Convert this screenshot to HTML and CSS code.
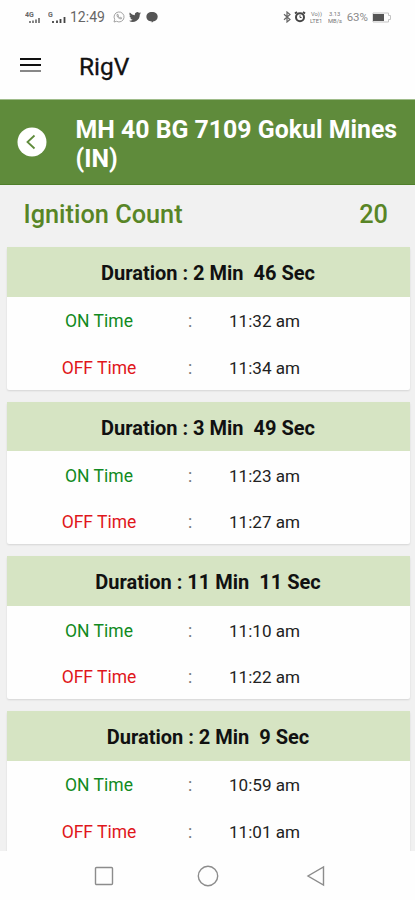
FILE: index.html
```
<!DOCTYPE html>
<html lang="en">

<head>
    <meta charset="UTF-8">
    <meta name="viewport" content="width=device-width, initial-scale=1.0">
    <title>RigV</title>
    <link rel="stylesheet" href="styles.css">
</head>

<body>
    <div class="status-bar">
        <div class="status-left">
            <svg class="signal" width="16" height="13" viewBox="0 0 16 13">
                <text x="0" y="5.5" class="tiny">4G</text>
                <path d="M5 12V10M8 12V9.5M11 12V8.5M14 12V7" />
            </svg>
            <svg class="signal second" width="18" height="13" viewBox="0 0 18 13">
                <text x="0" y="5.5" class="tiny">G</text>
                <path d="M5 12V10M9 12V9.5M12.5 12V8M16.5 12V6" />
            </svg>
            <span class="clock">12:49</span>
            <svg class="whatsapp" width="12" height="12" viewBox="0 0 12 12">
                <path d="M1 11l.7-2.6A5 5 0 1 1 3.6 10.3z" />
                <path d="M4 3.5c-.5 2 2 4.7 4.2 4.4l.4-1.1-1.3-.6-.6.6L5 5.2l.4-.7-.5-1.2z" />
            </svg>
            <svg class="solid" width="12" height="12" viewBox="0 0 24 24">
                <path d="M24 4.6a10 10 0 0 1-2.8.8 5 5 0 0 0 2.1-2.7 10 10 0 0 1-3.1 1.2 4.9 4.9 0 0 0-8.4 4.5A14 14 0 0 1 1.7 3.1a4.9 4.9 0 0 0 1.5 6.6 5 5 0 0 1-2.2-.6 4.9 4.9 0 0 0 3.9 4.9 5 5 0 0 1-2.2.1 4.9 4.9 0 0 0 4.6 3.4A10 10 0 0 1 0 19.5 14 14 0 0 0 21.5 7.1 10 10 0 0 0 24 4.6z" />
            </svg>
            <svg class="solid chat" width="12" height="12" viewBox="0 0 12 12">
                <path d="M6 1c3.5 0 5.7 2 5.7 4.7 0 2.7-2 4.5-4.600 4.700L5.800 11.700v-1.300C2.500 10.300.4 8.400.4 5.700.4 3 2.500 1 6 1z" />
            </svg>
        </div>
        <div class="status-right">
            <svg class="bluetooth" width="8" height="12" viewBox="0 0 8 12">
                <path d="M1 3.200l6 5.300L4 11V1l3 2.500-6 5.300" />
            </svg>
            <svg class="alarm" width="12" height="12" viewBox="0 0 12 12">
                <circle cx="6" cy="6.300" r="4" />
                <path d="M1 2.500L3 1M11 2.500L9 1" />
                <path class="hand" d="M6 4.300v2.200h1.600" />
            </svg>
            <svg class="rate" width="14" height="13" viewBox="0 0 14 13">
                <text x="1" y="5">Vo))</text>
                <text x="0" y="12">LTE1</text>
            </svg>
            <svg class="rate" width="15" height="13" viewBox="0 0 15 13">
                <text x="1" y="5">3.13</text>
                <text x="0" y="12">MB/s</text>
            </svg>
            <span class="percent">63%</span>
            <svg class="battery" width="20" height="11" viewBox="0 0 20 11">
                <path class="shell" d="M1 1h15.500v2.500h2v4h-2V10H1z" />
                <rect x="1" y="2" width="11" height="7" />
            </svg>
        </div>
    </div>

    <div class="app-bar">
        <div class="menu">
            <span></span>
            <span></span>
            <span></span>
        </div>
        <h1>RigV</h1>
    </div>

    <div class="vehicle">
        <svg class="back" width="30" height="30" viewBox="0 0 30 30">
            <circle cx="15" cy="15" r="14.500" />
            <path d="M17.500 8.500L10.500 15l7 6.500" />
        </svg>
        <h2>MH 40 BG 7109 Gokul Mines (IN)</h2>
    </div>

    <div class="content">
        <div class="count">
            <span>Ignition Count</span>
            <span>20</span>
        </div>

        <div class="card">
            <div class="duration">Duration : 2 Min&nbsp; 46 Sec</div>
            <div class="row">
                <span class="on">ON Time</span>
                <span class="colon">:</span>
                <span class="time">11:32 am</span>
            </div>
            <div class="row">
                <span class="off">OFF Time</span>
                <span class="colon">:</span>
                <span class="time">11:34 am</span>
            </div>
        </div>

        <div class="card">
            <div class="duration">Duration : 3 Min&nbsp; 49 Sec</div>
            <div class="row">
                <span class="on">ON Time</span>
                <span class="colon">:</span>
                <span class="time">11:23 am</span>
            </div>
            <div class="row">
                <span class="off">OFF Time</span>
                <span class="colon">:</span>
                <span class="time">11:27 am</span>
            </div>
        </div>

        <div class="card">
            <div class="duration">Duration : 11 Min&nbsp; 11 Sec</div>
            <div class="row">
                <span class="on">ON Time</span>
                <span class="colon">:</span>
                <span class="time">11:10 am</span>
            </div>
            <div class="row">
                <span class="off">OFF Time</span>
                <span class="colon">:</span>
                <span class="time">11:22 am</span>
            </div>
        </div>

        <div class="card">
            <div class="duration">Duration : 2 Min&nbsp; 9 Sec</div>
            <div class="row">
                <span class="on">ON Time</span>
                <span class="colon">:</span>
                <span class="time">10:59 am</span>
            </div>
            <div class="row">
                <span class="off">OFF Time</span>
                <span class="colon">:</span>
                <span class="time">11:01 am</span>
            </div>
        </div>
    </div>

    <div class="nav-bar">
        <svg width="20" height="20" viewBox="0 0 20 20">
            <rect x="1.500" y="1.500" width="17" height="17" rx="1" />
        </svg>
        <svg width="22" height="22" viewBox="0 0 22 22">
            <circle cx="11" cy="11" r="9.700" />
        </svg>
        <svg width="20" height="22" viewBox="0 0 20 22">
            <path d="M17.500 2v18L2 11z" />
        </svg>
    </div>
</body>

</html>
```
FILE: styles.css
```
* {
    box-sizing: border-box;
}

body {
    font-family: Roboto, sans-serif;
    background-color: #fefefe;
    color: #111;
    margin: 0;
    height: 900px;
    display: flex;
    flex-direction: column;
    overflow: hidden;
}

h1,
h2 {
    margin: 0;
}

svg {
    display: block;
    flex-shrink: 0;
}

.status-bar {
    height: 34px;
    flex-shrink: 0;
    padding: 0 23px 0 25px;
    display: flex;
    justify-content: space-between;
    align-items: center;
}

.status-left,
.status-right {
    display: flex;
    align-items: center;
}

.signal path {
    stroke: #777;
    stroke-width: 1.8;
}

.tiny {
    font-size: 7px;
    font-weight: 700;
    fill: #666;
}

.second {
    margin-left: 7px;
}

.second path {
    stroke: #444;
}

.clock {
    font-size: 14px;
    color: #666;
    margin: 0 8px 0 4px;
}

.whatsapp {
    margin-right: 4px;
}

.whatsapp path {
    fill: none;
    stroke: #999;
    stroke-width: 0.9;
}

.solid {
    fill: #555;
}

.chat {
    margin-left: 5px;
}

.bluetooth path {
    fill: none;
    stroke: #666;
    stroke-width: 1.2;
}

.alarm {
    margin-left: 3px;
}

.alarm circle,
.alarm path {
    fill: none;
    stroke: #444;
    stroke-width: 2;
}

.alarm .hand {
    stroke-width: 1;
}

.rate {
    font-size: 5.8px;
    fill: #777;
    margin-left: 4px;
}

.percent {
    font-size: 11.5px;
    color: #8a8a8a;
    margin: 0 4px;
}

.battery rect {
    fill: #555;
}

.battery .shell {
    fill: none;
    stroke: #c4c4c4;
}

.app-bar {
    height: 65px;
    flex-shrink: 0;
    padding: 0 20px 4px;
    display: flex;
    align-items: center;
}

.menu {
    width: 21px;
    display: flex;
    flex-direction: column;
    gap: 4px;
    margin-right: 38px;
}

.menu span {
    height: 2px;
    background-color: #111;
}

.menu span:last-child {
    background-color: #888;
}

h1 {
    font-size: 24.5px;
    font-weight: 400;
    -webkit-text-stroke: 0.3px #111;
    padding-top: 3px;
}

.vehicle {
    height: 86px;
    flex-shrink: 0;
    padding: 0 8px 0 17px;
    background-color: #5f8b3b;
    border-top: 1px solid #9fbc8a;
    border-bottom: 1px solid #4f7f2a;
    display: flex;
    align-items: center;
}

.back {
    margin-right: 28.5px;
}

.back circle {
    fill: #fff;
}

.back path {
    fill: none;
    stroke: #5f8b3b;
    stroke-width: 1.8;
}

h2 {
    font-size: 24.85px;
    line-height: 29px;
    font-weight: 700;
    color: #fff;
    padding-top: 4px;
}

.content {
    height: 666px;
    flex-shrink: 0;
    background-color: #f1f1f1;
    padding: 0 5.5px 0 6.5px;
    overflow: hidden;
}

.count {
    height: 62px;
    padding: 0 21.5px 4px 17px;
    display: flex;
    justify-content: space-between;
    align-items: center;
    font-size: 25.3px;
    font-weight: 500;
    color: #588526;
}

.card {
    height: 142.5px;
    margin-bottom: 12.2px;
    background-color: #fefefe;
    border-radius: 2px;
    box-shadow: 0 1px 2px rgba(0, 0, 0, 0.12);
}

.duration {
    height: 49.5px;
    line-height: 53px;
    background-color: #d6e4c3;
    font-size: 20px;
    font-weight: 700;
    text-align: center;
}

.row {
    height: 46.5px;
    padding: 3px 0 0 35px;
    display: grid;
    grid-template-columns: 115px 67px 82px;
    align-items: center;
    text-align: center;
    font-size: 17.5px;
    color: #222;
}

.on {
    color: #118a22;
}

.off {
    color: #e0161b;
}

.colon {
    color: #777;
}

.time {
    font-size: 17.1px;
}

.nav-bar {
    height: 49px;
    padding: 0 88px 0 94px;
    display: grid;
    grid-template-columns: 103px 109px 21px;
    align-items: center;
}

.nav-bar svg {
    fill: none;
    stroke: #8c8c8c;
    stroke-width: 1.4;
}
```
